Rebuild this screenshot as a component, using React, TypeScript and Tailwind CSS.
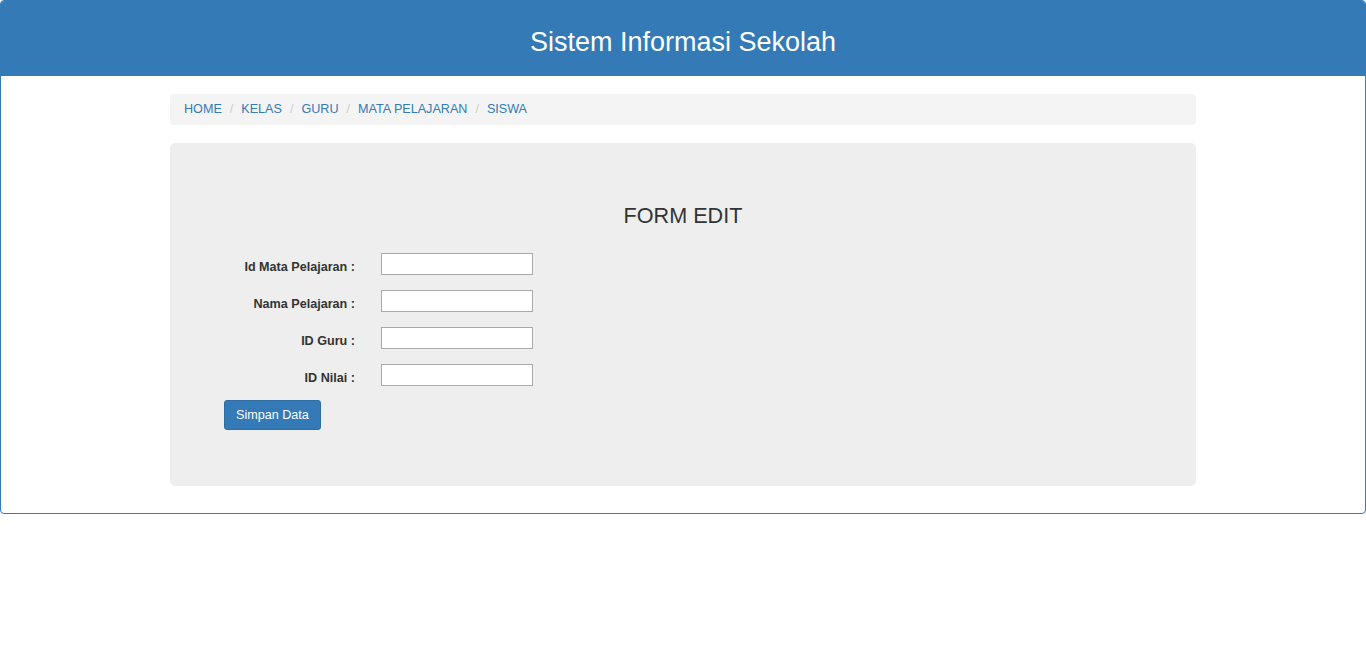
const links = ["HOME", "KELAS", "GURU", "MATA PELAJARAN", "SISWA"];

const fields = [
  { id: "id_mapel", label: "Id Mata Pelajaran :" },
  { id: "nama_pelajaran", label: "Nama Pelajaran :" },
  { id: "id_guru", label: "ID Guru :" },
  { id: "id_nilai", label: "ID Nilai :" },
];

export default function App() {
  return (
    <div className="min-h-[656px] bg-white text-[#333] font-['Liberation_Sans',Arial,sans-serif]">
      <div className="border border-[#337ab7] rounded-[4px]">
        {/* heading */}
        <div className="h-[75px] bg-[#337ab7] flex items-center justify-center rounded-t-[3px]">
          <h2 className="text-[27px] leading-[30px] text-white pt-[7px]">Sistem Informasi Sekolah</h2>
        </div>

        <div className="w-[1026px] mx-auto pt-[18px] pb-[27px]">
          <ol className="flex items-center h-[31px] px-[14px] bg-[#f4f4f4] rounded-[4px] text-[12.6px]">
            {links.map((l, i) => (
              <li key={l} className="flex items-center">
                {i > 0 && <span className="text-[#ccc] px-[8px]">/</span>}
                <a href="#" className="text-[#337ab7]">
                  {l}
                </a>
              </li>
            ))}
          </ol>

          <div className="mt-[18px] h-[343px] bg-[#eee] rounded-[5px] px-[54px] pt-[61px]">
            <h3 className="text-center text-[21.6px] leading-[24px]">FORM EDIT</h3>

            <form className="mt-[25px]" onSubmit={(e) => e.preventDefault()}>
              <div className="grid grid-cols-[131px_auto] gap-x-[26px] gap-y-[15px] justify-start">
                {fields.map((f) => (
                  <div key={f.id} className="contents">
                    <label
                      htmlFor={f.id}
                      className="h-[22px] leading-[28px] text-right font-bold text-[12.6px] whitespace-nowrap"
                    >
                      {f.label}
                    </label>
                    <input
                      id={f.id}
                      type="text"
                      className="w-[152px] h-[22px] bg-white border border-[#a9a9a9] px-1 text-[12.6px] outline-none"
                    />
                  </div>
                ))}
              </div>

              <button
                type="submit"
                className="mt-[14px] h-[30px] px-[11px] bg-[#337ab7] border border-[#2e6da4] rounded-[3px] text-white text-[12.6px]"
              >
                Simpan Data
              </button>
            </form>
          </div>
        </div>
      </div>
    </div>
  );
}
